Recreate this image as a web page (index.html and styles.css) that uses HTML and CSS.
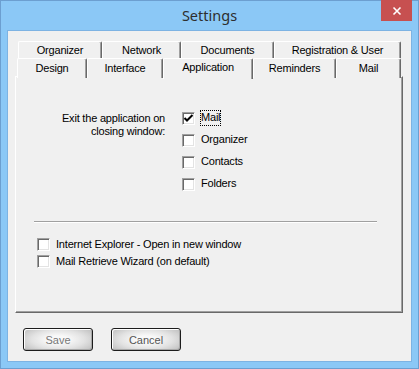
FILE: index.html
```html
<!DOCTYPE html>
<html lang="en">
<head>
	<meta charset="UTF-8">
	<title>Settings</title>
	<link rel="stylesheet" href="styles.css">
</head>
<body>
	<div class="window">
		<div class="titlebar">
			<span></span>
			<span class="title">Settings</span>
			<button class="close-btn" title="Close">
				<svg width="10" height="10" viewBox="0 0 10 10"><path d="M1.5 1.5 L8.5 8.5 M8.5 1.5 L1.5 8.5" stroke="#fff" stroke-width="1.6" fill="none"/></svg>
			</button>
		</div>

		<div class="client">
			<div class="tabs">
				<div class="tab-row back">
					<div class="tab">Organizer</div>
					<div class="tab">Network</div>
					<div class="tab">Documents</div>
					<div class="tab">Registration &amp; User</div>
				</div>
				<div class="tab-row front">
					<div class="tab">Design</div>
					<div class="tab">Interface</div>
					<div class="tab selected">Application</div>
					<div class="tab">Reminders</div>
					<div class="tab">Mail</div>
				</div>
			</div>

			<div class="panel">
				<div class="exit-group">
					<div class="exit-label">Exit the application on<br>closing window:</div>
					<div class="exit-list">
						<label class="check-row">
							<span class="box">
								<svg width="11" height="11" viewBox="0 0 11 11"><path d="M1.5 5 L4 7.5 L9.5 2" stroke="#000" stroke-width="2" fill="none"/></svg>
							</span>
							<span class="check-text focused">Mail</span>
						</label>
						<label class="check-row"><span class="box"></span><span class="check-text">Organizer</span></label>
						<label class="check-row"><span class="box"></span><span class="check-text">Contacts</span></label>
						<label class="check-row"><span class="box"></span><span class="check-text">Folders</span></label>
					</div>
				</div>

				<div class="separator"></div>

				<div class="options">
					<label class="check-row small"><span class="box"></span><span class="check-text">Internet Explorer - Open in new window</span></label>
					<label class="check-row small"><span class="box"></span><span class="check-text">Mail Retrieve Wizard (on default)</span></label>
				</div>
			</div>

			<div class="buttons">
				<button class="btn save">Save</button>
				<button class="btn">Cancel</button>
			</div>
		</div>
	</div>
</body>
</html>
```

FILE: styles.css
```css
* {
	box-sizing: border-box;
}

body {
	margin: 0;
	padding: 0;
	font-family: "Liberation Sans", Arial, sans-serif;
	font-size: 11px;
	letter-spacing: -0.2px;
	color: #000;
}

.window {
	width: 419px;
	height: 369px;
	border: 1px solid #6c9fd0;
	background: #8bc8f6;
	padding: 0 7px 7px;
	display: flex;
	flex-direction: column;
}

.titlebar {
	height: 30px;
	display: grid;
	grid-template-columns: 1fr auto 1fr;
	align-items: center;
}
.title {
	font-family: "Noto Sans", "Open Sans", sans-serif;
	font-size: 14.5px;
	letter-spacing: 0;
	color: #2e2e2e;
	line-height: 20px;
	margin-top: -2px;
}
.close-btn {
	justify-self: end;
	align-self: start;
	width: 31px;
	height: 21px;
	margin: -1px -1px 0 0;
	padding: 0;
	border: none;
	background: #c75050;
	display: flex;
	align-items: center;
	justify-content: center;
}

.client {
	flex: 1;
	background: #f0f0f0;
	padding: 10px 0 0 7px;
	box-shadow: 0 0 0 1px #7db3e3;
}

/* tabs */
.tab-row {
	display: grid;
	height: 17px;
}
.tab-row.back {
	grid-template-columns: 84px 79px 93px 127px;
	margin-left: 3px;
}
.tab-row.front {
	grid-template-columns: 70px 76px 90px 83px 65px;
	height: 18px;
	margin-left: 2px;
}
.tab {
	background: #f0f0f0;
	border-top: 1px solid #fff;
	border-left: 1px solid #fff;
	border-right: 1px solid #696969;
	border-radius: 2px 2px 0 0;
	box-shadow: inset -1px 0 #a0a0a0;
	display: flex;
	align-items: center;
	justify-content: center;
	padding-bottom: 1px;
}
.tab.selected {
	position: relative;
	z-index: 1;
	align-self: end;
	height: 21px;
	margin-bottom: -1px;
	padding: 0 0 4px;
}

.panel {
	width: 388px;
	height: 237px;
	border-top: 1px solid #fff;
	border-left: 1px solid #fff;
	border-right: 1px solid #696969;
	border-bottom: 1px solid #696969;
	box-shadow: inset -1px -1px #a0a0a0;
	padding: 30px 25px 0 18px;
}

.exit-group {
	display: grid;
	grid-template-columns: 131px auto;
	column-gap: 17px;
	align-items: start;
}
.exit-label {
	text-align: right;
	line-height: 13px;
	padding-top: 5px;
}

.check-row {
	display: flex;
	align-items: center;
	height: 22px;
}
.check-row.small {
	height: 17px;
}
.box {
	width: 13px;
	height: 13px;
	flex: none;
	background: #fff;
	border: 1px solid;
	border-color: #a0a0a0 #fff #fff #a0a0a0;
	box-shadow: inset 1px 1px #696969, inset -1px -1px #e3e3e3;
	display: flex;
	align-items: center;
	justify-content: center;
}
.check-text {
	margin-left: 5px;
	padding: 1px 1px 2px;
	line-height: 13px;
}
.check-text.focused {
	outline: 1px dotted #000;
	outline-offset: -1px;
}

.separator {
	margin-top: 26px;
	border-top: 1px solid #a0a0a0;
	border-bottom: 1px solid #fff;
}

.options {
	margin: 13px 0 0 3px;
}

.buttons {
	display: flex;
	gap: 18px;
	margin-top: 15px;
	padding-left: 8px;
}
.btn {
	width: 70px;
	height: 23px;
	padding: 0;
	border: 1px solid #1c1c1c;
	border-radius: 3px;
	background: radial-gradient(ellipse 60% 70% at 50% 50%, #f9f9f9 25%, #e2e2e2 65%, #c4c4c4 100%);
	box-shadow: inset 1px 1px #fff, inset -1px -1px #a8a8a8;
	font-family: "Liberation Sans", Arial, sans-serif;
	font-size: 11px;
	letter-spacing: 0;
	color: #555;
}
.btn.save {
	color: #777;
}
```
